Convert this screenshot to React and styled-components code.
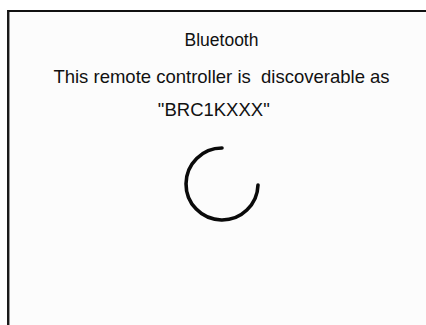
import React from 'react';
import styled, { createGlobalStyle } from 'styled-components';

const GlobalStyle = createGlobalStyle`
  html, body {
    margin: 0;
    padding: 0;
    background: #ffffff;
    overflow: hidden;
  }
  body {
    font-family: "Liberation Sans", Arial, sans-serif;
  }
`;

const Screen = styled.div`
  width: 426px;
  height: 325px;
  padding: 10px 0 0 7px;
  box-sizing: border-box;
  overflow: hidden;
`;

const Panel = styled.section`
  width: 427px;
  height: 330px;
  background: #fcfcfc;
  border-top: 2px solid #111;
  border-left: 2px solid #1a1a1a;
  box-shadow: inset 1px 0 0 #9a9a9a;
  display: flex;
  flex-direction: column;
  align-items: center;
  padding-top: 11px;
  box-sizing: border-box;
  color: #111;
`;

const Title = styled.h1`
  margin: 0;
  font-size: 17.5px;
  font-weight: normal;
  line-height: 34px;
`;

const Message = styled.p`
  margin: 3px 0 0;
  font-size: 18.5px;
  line-height: 33px;
  text-align: center;
  white-space: pre;
`;

const Spinner = styled.svg`
  margin-top: 18px;
  width: 80px;
  height: 80px;
`;

const App = () => {
  return (
    <>
      <GlobalStyle />
      <Screen>
        <Panel>
          <Title>Bluetooth</Title>
          <Message>
            {'This remote controller is  discoverable as'}
            <br />
            {'"BRC1KXXX"   '}
          </Message>
          <Spinner viewBox="0 0 80 80">
            <path
              d="M40 4 A36 36 0 1 0 76 41"
              fill="none"
              stroke="#0a0a0a"
              strokeWidth="3.6"
              strokeLinecap="round"
            />
          </Spinner>
        </Panel>
      </Screen>
    </>
  );
};

export default App;
